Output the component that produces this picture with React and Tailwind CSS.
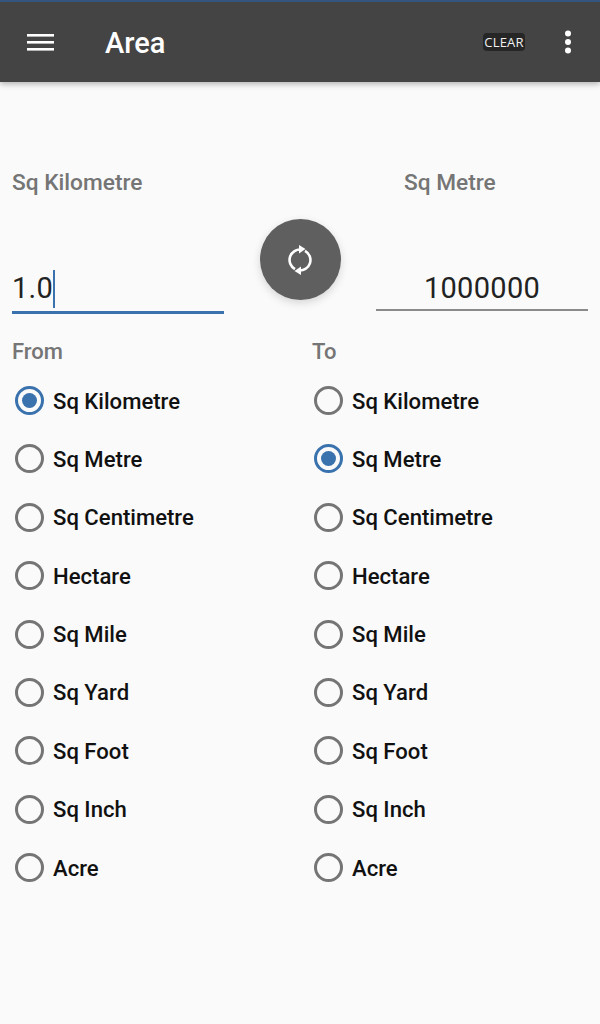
const UNITS = ["Sq Kilometre","Sq Metre","Sq Centimetre","Hectare","Sq Mile","Sq Yard","Sq Foot","Sq Inch","Acre"];

function Radio({ label, checked }) {
  return (
    <div className="flex h-[58.4px] items-center gap-[9px]">
      <span className={"flex h-[29px] w-[29px] items-center justify-center rounded-full border-[3px] " + (checked ? "border-[#3a72ad]" : "border-[#757575]")}>
        {checked && <span className="h-[15px] w-[15px] rounded-full bg-[#3a72ad]" />}
      </span>
      <span className="text-[22.1px] font-medium leading-none text-[#111111]">{label}</span>
    </div>
  );
}

function Column({ title, selected, className, titleClass }) {
  return (
    <div className={className}>
      <div className={"text-[22px] font-medium leading-none text-[#757575] " + titleClass}>{title}</div>
      <div className="mt-[8.4px] pl-[15px]">
        {UNITS.map((u) => <Radio key={u} label={u} checked={u === selected} />)}
      </div>
    </div>
  );
}

export default function App() {
  return (
    <div className="flex h-[1024px] w-[600px] flex-col overflow-hidden bg-[#fafafa] font-['Roboto',sans-serif]">
      <header className="flex h-[82px] items-center border-t-2 border-[#34557d] bg-[#444444] pl-[27px] pr-[28px] shadow-[0_2px_6px_rgba(0,0,0,0.3)]">
        <svg width="28" height="18" viewBox="0 0 28 18" className="shrink-0" fill="#ffffff">
          <rect x="0" y="1" width="27" height="2.6" />
          <rect x="0" y="8" width="27" height="2.6" />
          <rect x="0" y="15" width="27" height="2.6" />
        </svg>
        <h1 className="ml-[50px] pt-[2px] text-[29px] font-medium leading-none text-white">Area</h1>
        <span className="ml-auto flex h-[18px] w-[42px] items-center justify-center rounded-[4px] bg-[#262626] text-[13px] leading-none tracking-[0.2px] text-[#f0f0f0] font-['Open_Sans',sans-serif]">CLEAR</span>
        <svg width="8" height="24" viewBox="0 0 8 24" className="ml-[39px] shrink-0" fill="#ffffff">
          <circle cx="4" cy="3.5" r="3" />
          <circle cx="4" cy="12" r="3" />
          <circle cx="4" cy="20.5" r="3" />
        </svg>
      </header>

      <section className="mt-[88px] flex items-start px-3">
        <div className="w-[212px] shrink-0">
          <div className="text-[22.7px] font-medium leading-[26px] text-[#757575]">Sq Kilometre</div>
          <div className="mt-[64px] flex h-[54px] items-center border-b-[3px] border-[#3a72ad] pt-[6px]">
            <span className="text-[29px] leading-none tracking-[0.3px] text-[#222222]">1.0</span>
            <span className="h-[38px] w-[2px] bg-[#3a72ad]" />
          </div>
        </div>
        <div className="flex flex-1 justify-center pt-[49px]">
          <button className="flex h-[81px] w-[81px] items-center justify-center rounded-full bg-[#5f5f5f] shadow-[0_3px_8px_rgba(0,0,0,0.15)]">
            <svg width="26" height="32" viewBox="0 0 26 32" fill="none" stroke="#ffffff" strokeWidth="2.6">
              <path d="M8 25.2 A10.5 10.5 0 0 1 14.5 5.6" />
              <path d="M18 6.8 A10.5 10.5 0 0 1 11.5 26.4" />
              <path d="M12 1 L18.5 5 L12 9.5 Z" fill="#ffffff" stroke="none" />
              <path d="M14 22.5 L7.5 27 L14 31 Z" fill="#ffffff" stroke="none" />
            </svg>
          </button>
        </div>
        <div className="w-[212px] shrink-0">
          <div className="pl-[28px] text-[22.7px] font-medium leading-[26px] text-[#757575]">Sq Metre</div>
          <div className="mt-[63px] flex h-[52px] items-center justify-center border-b-2 border-[#8a8a8a] pt-[8px] text-[29px] leading-none tracking-[0.3px] text-[#222222]">1000000</div>
        </div>
      </section>

      <section className="mt-[27px] flex items-start">
        <Column title="From" selected="Sq Kilometre" className="w-[299px]" titleClass="pl-3" />
        <Column title="To" selected="Sq Metre" className="flex-1" titleClass="pl-[13px]" />
      </section>
    </div>
  );
}
